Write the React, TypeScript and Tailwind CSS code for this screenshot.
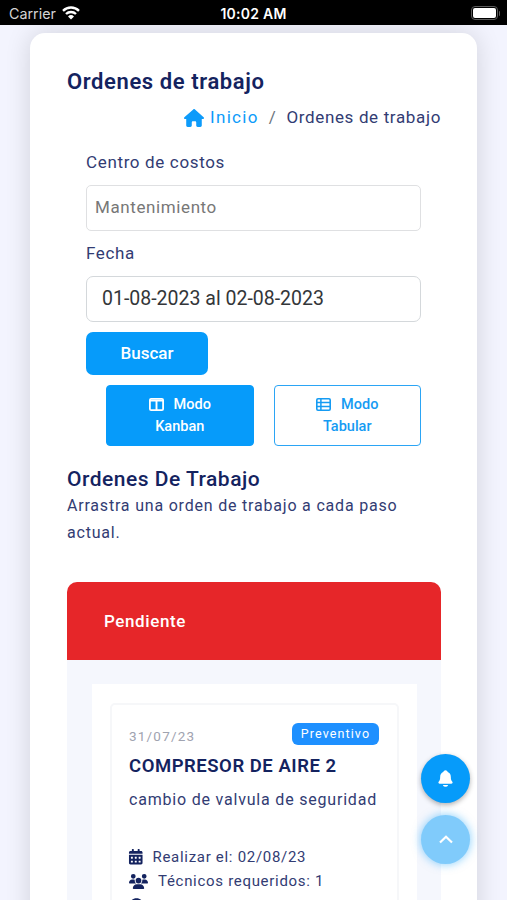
import React from 'react';
import { FaCalendarAlt, FaClock } from 'react-icons/fa';
import { FaHouse, FaUsers } from 'react-icons/fa6';
import { IoNotifications } from 'react-icons/io5';

interface WorkOrder {
  date: string;
  type: string;
  asset: string;
  description: string;
  dueDate: string;
  technicians: number;
}

const orders: WorkOrder[] = [
  {
    date: '31/07/23',
    type: 'Preventivo',
    asset: 'COMPRESOR DE AIRE 2',
    description: 'cambio de valvula de seguridad',
    dueDate: '02/08/23',
    technicians: 1
  }
];

const ColumnsIcon: React.FC = () => (
  <svg className="mr-[10px]" width="15" height="13" viewBox="0 0 15 13" fill="none" stroke="currentColor">
    <rect x="0.9" y="0.9" width="13.2" height="11.2" rx="1.2" strokeWidth="1.8" />
    <path d="M1 2.6h13M7.5 2.5V12" strokeWidth="1.9" />
  </svg>
);

const ListIcon: React.FC = () => (
  <svg className="mr-[10px]" width="15" height="13" viewBox="0 0 15 13" fill="none" stroke="currentColor">
    <rect x="0.8" y="0.8" width="13.4" height="11.4" rx="1.2" strokeWidth="1.6" />
    <path d="M1 4.6h13M1 8.4h13M4.9 1v11" strokeWidth="1.5" />
  </svg>
);

const StatusBar: React.FC = () => (
  <div className="relative z-10 grid h-[25px] shrink-0 grid-cols-3 items-center bg-black pt-[3px] text-[#d4d4d4] font-['Inter',sans-serif]">
    <div className="flex items-center gap-1.5 pl-[9px] text-[14.3px] leading-none">
      <span>Carrier</span>
      <svg className="-mt-[2px]" width="18" height="14" viewBox="0 0 18 14" fill="none" stroke="#fff" strokeWidth="2.4">
        <path d="M1 4.8a11.5 11.5 0 0 1 16 0" />
        <path d="M4 8a7.2 7.2 0 0 1 10 0" />
        <path d="M9 13.6 6 10.5a4.3 4.3 0 0 1 6 0z" fill="#fff" stroke="none" />
      </svg>
    </div>
    <div className="text-center text-[14px] font-semibold leading-none tracking-[0.25px] text-white">10:02 AM</div>
    <div className="flex items-center justify-end pr-[7px]">
      <div className="-mt-[2px] h-[14px] w-[27px] rounded-[4px] border-[1.5px] border-[#5b5b5b] p-px">
        <div className="h-full w-full rounded-[2px] bg-white" />
      </div>
      <div className="-mt-[2px] ml-px h-[5px] w-[1.5px] rounded-r bg-[#5b5b5b]" />
    </div>
  </div>
);

const OrderCard: React.FC<{ order: WorkOrder }> = ({ order }) => (
  <div className="h-[260px] rounded-[5px] border-2 border-[#f6f7f9] pl-[17px] pr-[18px] pt-[18px]">
    <div className="flex h-[22px] items-center justify-between">
      <span className="mt-[5px] text-[13.5px] tracking-[1.2px] text-[#a0a3b0]">{order.date}</span>
      <span className="flex h-[22px] w-[87px] items-center justify-center rounded-[6px] bg-[#1e90ff] text-[12.5px] tracking-[1.1px] text-white">
        {order.type}
      </span>
    </div>
    <h4 className="mt-[9px] whitespace-nowrap text-[18.5px] font-semibold leading-[24px] tracking-[0.53px] text-[#14235f]">
      {order.asset}
    </h4>
    <p className="mt-[10px] whitespace-nowrap text-[16px] leading-[24px] tracking-[0.8px]">{order.description}</p>
    <ul className="mt-[33px] text-[15px] leading-[24px] tracking-[0.7px]">
      <li className="flex items-center">
        <FaCalendarAlt className="-ml-px mr-[9px] size-[15.5px] text-[#14235f]" />
        Realizar el: {order.dueDate}
      </li>
      <li className="flex items-center">
        <FaUsers className="mr-[10px] size-[19px] text-[#14235f]" />
        Técnicos requeridos: {order.technicians}
      </li>
      <li className="flex h-[24px] items-center">
        <FaClock className="mr-[10px] size-[15px] text-[#14235f]" />
      </li>
    </ul>
  </div>
);

const App: React.FC = () => {
  return (
    <div className="relative flex h-[900px] w-[507px] flex-col overflow-hidden bg-[#f3f4fe] text-[#323c73] font-['Roboto',sans-serif]">
      <StatusBar />

      <main className="mx-[30px] mt-[8px] h-[1000px] shrink-0 rounded-[15px] bg-white pl-[37px] pr-[36px] pt-[35px] shadow-[0_0_26px_rgba(0,0,0,0.14)]">
        <h1 className="text-[22px] font-semibold leading-[28px] tracking-[0.6px] text-[#14235f]">Ordenes de trabajo</h1>

        {/* Breadcrumb */}
        <nav className="mt-[9px] flex h-[26px] items-center justify-end text-[17px] tracking-[0.65px]">
          <FaHouse className="mr-[6px] -mt-px size-[20px] text-[#0d9bfa]" />
          <span className="tracking-[1.3px] text-[#0d9bfa]">Inicio</span>
          <span className="mx-[10px] text-[#6c757d]">/</span>
          <span>Ordenes de trabajo</span>
        </nav>

        {/* Filters */}
        <form className="pl-[19px] pr-[20px] pt-[17px]">
          <label className="block h-[37px] text-[17px] leading-[28px] tracking-[0.65px]">Centro de costos</label>
          <div className="flex h-[46px] items-center rounded-[5px] border border-[#dfe0e2] px-[8px] text-[17px] tracking-[0.6px] text-[#777]">
            Mantenimiento
          </div>
          <label className="mt-[8px] block h-[37px] text-[17px] leading-[28px] tracking-[0.65px]">Fecha</label>
          <div className="flex h-[46px] items-center rounded-[7px] border border-[#d4d8db] px-[15px] text-[19.5px] text-[#333639]">
            01-08-2023 al 02-08-2023
          </div>
          <button
            type="button"
            className="mt-[10px] block h-[43px] w-[122px] rounded-[7px] bg-[#069bfa] text-[17px] font-medium text-white"
          >
            Buscar
          </button>
        </form>

        {/* View mode */}
        <div className="mt-[10px] flex gap-[20px] pl-[39px] pr-[20px] text-[14.5px] font-medium leading-[22px]">
          <button type="button" className="h-[61px] flex-1 rounded-[4px] border border-[#069bfa] bg-[#069bfa] text-white">
            <span className="flex items-center justify-center">
              <ColumnsIcon />
              Modo
            </span>
            Kanban
          </button>
          <button type="button" className="h-[61px] flex-1 rounded-[4px] border border-[#2ba5f5] text-[#159bf3]">
            <span className="flex items-center justify-center">
              <ListIcon />
              Modo
            </span>
            Tabular
          </button>
        </div>

        <h2 className="mt-[20px] text-[21px] font-medium leading-[26px] tracking-[0.5px] text-[#14235f]">Ordenes De Trabajo</h2>
        <p className="text-[16px] leading-[27px] tracking-[0.8px]">Arrastra una orden de trabajo a cada paso actual.</p>

        {/* Kanban column */}
        <section className="mt-[36px] h-[500px] overflow-hidden rounded-t-[10px] bg-[#f5f7fd]">
          <header className="flex h-[78px] items-center bg-[#e62629] pl-[37px] pt-[2px] text-[17px] font-medium tracking-[0.6px] text-white">
            Pendiente
          </header>
          <div className="ml-[25px] mr-[24px] mt-[24px] bg-white px-[18px] pt-[19px]">
            {orders.map((order) => (
              <OrderCard key={order.asset} order={order} />
            ))}
          </div>
        </section>
      </main>

      {/* Floating actions */}
      <div className="absolute left-[421px] top-[754px] flex flex-col gap-[12px]">
        <button
          type="button"
          className="flex size-[49px] items-center justify-center rounded-full bg-[#069bfa] text-white shadow-[0_2px_5px_rgba(0,0,0,0.3)]"
        >
          <IoNotifications className="size-[19px]" />
        </button>
        <button
          type="button"
          className="flex size-[49px] items-center justify-center rounded-full bg-[#80cbfb] text-white shadow-[0_0_10px_rgba(6,155,250,0.5)]"
        >
          <svg width="14" height="9" viewBox="0 0 14 9" fill="none" stroke="currentColor" strokeWidth="2.2">
            <path d="M1 7.5 7 1.8l6 5.7" />
          </svg>
        </button>
      </div>
    </div>
  );
};

export default App;
